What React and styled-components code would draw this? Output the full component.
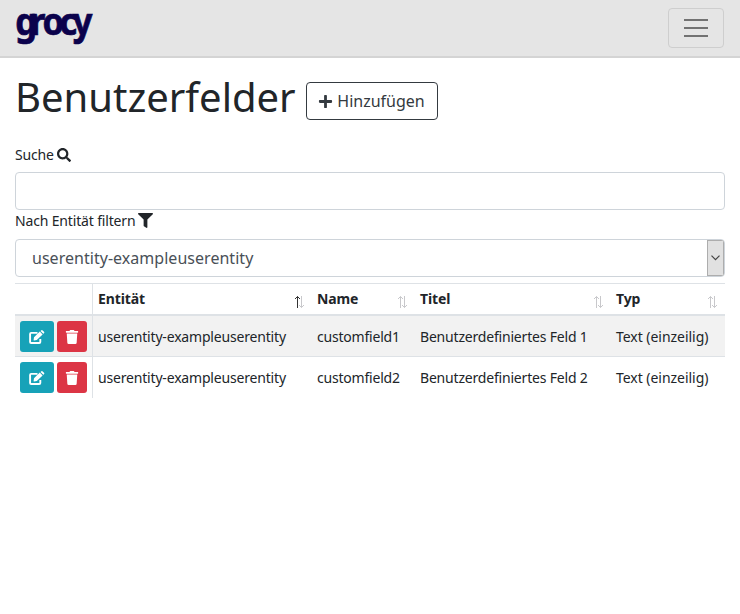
import React from "react";
import styled, { createGlobalStyle } from "styled-components";
import { FaPlus, FaSearch, FaFilter, FaTrash } from "react-icons/fa";

const GlobalStyle = createGlobalStyle`
  *, *::before, *::after { box-sizing: border-box; }
  body {
    margin: 0;
    background: #fff;
    color: #212529;
    font-family: "Noto Sans", "Open Sans", sans-serif;
    font-size: 14px;
    line-height: 1.5;
  }
`;

const Navbar = styled.nav`
  display: flex;
  align-items: center;
  justify-content: space-between;
  height: 58px;
  padding: 0 16px 0 15px;
  background: #e5e5e5;
  border-bottom: 2px solid #d4d4d4;
`;

const Logo = styled.svg`
  display: block;
  width: 90px;
  height: 56px;
  overflow: visible;
  fill: #0b024c;
  stroke: #0b024c;
  stroke-width: 0.7px;
  font-family: "Noto Sans", sans-serif;
  font-weight: 700;
  font-size: 37.5px;
`;

const Toggler = styled.button`
  display: flex;
  align-items: center;
  justify-content: center;
  width: 56px;
  height: 40px;
  padding: 0;
  background: transparent;
  border: 1px solid #cecece;
  border-radius: 4px;
`;

const Content = styled.main`
  padding: 14px 15px 0;
`;

const TitleRow = styled.header`
  display: flex;
  align-items: flex-start;
  height: 72px;
`;

const Title = styled.h1`
  margin: 1px 0 0;
  width: 291px;
  font-size: 40px;
  font-weight: 400;
  line-height: 48px;
  white-space: nowrap;
`;

const AddButton = styled.button`
  display: flex;
  align-items: center;
  justify-content: center;
  gap: 4px;
  width: 132px;
  height: 38px;
  margin-top: 10px;
  padding: 0 1px 0 0;
  background: transparent;
  border: 1px solid #343a40;
  border-radius: 4px;
  color: #343a40;
  font: 400 16px/24px "Noto Sans", sans-serif;
  white-space: nowrap;
`;

const Label = styled.label`
  display: flex;
  align-items: center;
  gap: 3px;
  height: 21px;
  margin-bottom: ${(p) => p.$gap};
  letter-spacing: -0.16px;
`;

const SearchInput = styled.input`
  display: block;
  width: 100%;
  height: 38px;
  padding: 6px 12px;
  border: 1px solid #ced4da;
  border-radius: 4px;
  outline: none;
  font: 400 16px/24px "Noto Sans", sans-serif;
`;

const Select = styled.div`
  display: flex;
  align-items: stretch;
  justify-content: space-between;
  height: 38px;
  margin-bottom: 6px;
  padding-left: 16px;
  border: 1px solid #ced4da;
  border-radius: 4px;
  overflow: hidden;
  color: #495057;
  font-size: 16px;
  letter-spacing: 0.03px;
  line-height: 36px;
`;

const SelectArrow = styled.span`
  display: flex;
  align-items: center;
  justify-content: center;
  width: 17px;
  padding-right: 1px;
  background: #e1e1e1;
  border: 1px solid #adadad;
`;

const Table = styled.table`
  width: 710px;
  table-layout: fixed;
  border-collapse: separate;
  border-spacing: 0;
`;

const HeadCell = styled.th`
  height: 33px;
  padding: 0 5px;
  border-top: 1px solid #dee2e6;
  border-bottom: 2px solid #dee2e6;
  border-right: ${(p) => (p.$divider ? "1px solid #dee2e6" : "0")};
  text-align: left;
  font-weight: 700;
  letter-spacing: -0.1px;
`;

const HeadContent = styled.div`
  display: flex;
  align-items: center;
  justify-content: space-between;
  height: 30px;
  padding-bottom: 2px;
`;

const SortIcon = styled.svg`
  width: 10px;
  height: 14px;
  margin: 8px 3px 0 0;
  fill: none;
  stroke: #c8c8cb;
`;

const Row = styled.tr`
  background: ${(p) => (p.$striped ? "#f2f2f2" : "#fff")};
`;

const Cell = styled.td`
  height: ${(p) => (p.$first ? "40px" : "42px")};
  padding: 0 5px;
  border-top: ${(p) => (p.$first ? "0" : "1px solid #dee2e6")};
  border-right: ${(p) => (p.$divider ? "1px solid #dee2e6" : "0")};
  letter-spacing: ${(p) => p.$tracking || "normal"};
  white-space: nowrap;
  vertical-align: middle;
`;

const Actions = styled.div`
  display: flex;
  gap: 3px;
`;

const ActionButton = styled.button`
  display: flex;
  align-items: center;
  justify-content: center;
  flex: none;
  width: ${(p) => (p.$danger ? "30px" : "34px")};
  height: 31px;
  padding: 1px 0 0;
  border: 0;
  border-radius: 3px;
  background: ${(p) => (p.$danger ? "#dc3545" : "#17a2b8")};
  color: #fff;
  font-size: 14px;
`;

const columns = [
  { label: "Entität", width: 219, sorted: true, tracking: "-0.18px" },
  { label: "Name", width: 103, tracking: "-0.21px" },
  { label: "Titel", width: 196, tracking: "-0.19px" },
  { label: "Typ", width: 114, tracking: "-0.04px" },
];

const fields = [
  ["userentity-exampleuserentity", "customfield1", "Benutzerdefiniertes Feld 1", "Text (einzeilig)"],
  ["userentity-exampleuserentity", "customfield2", "Benutzerdefiniertes Feld 2", "Text (einzeilig)"],
];

function Sort({ active }) {
  return (
    <SortIcon viewBox="0 0 10 14">
      <path d="M3.5 13V1.5M1 4L3.5 1.5L6 4" stroke={active ? "#333" : undefined} />
      <path d="M7.5 1V12.5M5 10L7.5 12.5L10 10" />
    </SortIcon>
  );
}

function EditIcon() {
  return (
    <svg width="16" height="14" viewBox="0 0 16 14">
      <path d="M8.5 2.9H2.2Q1.1 2.9 1.1 4V12Q1.1 13 2.2 13H10.2Q11.3 13 11.3 12V9" fill="none" stroke="#fff" strokeWidth="1.9" />
      <path d="M4.6 10L5 7.3L10.8 1.6L13.6 4.4L7.8 10.1L5.1 10.5Q4.6 10.5 4.6 10ZM11.5 .9L12.1 .4Q12.9 -.3 13.7 .4L15 1.7Q15.7 2.5 15 3.2L14.3 3.8Z" fill="#fff" />
    </svg>
  );
}

export default function App() {
  return (
    <>
      <GlobalStyle />
      <Navbar>
        <Logo viewBox="0 0 90 56" aria-label="grocy">
          <text transform="scale(0.92 1)" x="0.2 16.4 29.8 48.3 62.8" y="35.4">grocy</text>
        </Logo>
        <Toggler aria-label="Menü">
          <svg width="24" height="18" viewBox="0 0 24 18" stroke="#727272" strokeWidth="2">
            <path d="M0 1H24M0 9H24M0 17H24" />
          </svg>
        </Toggler>
      </Navbar>
      <Content>
        <TitleRow>
          <Title>Benutzerfelder</Title>
          <AddButton><FaPlus size={15} />Hinzufügen</AddButton>
        </TitleRow>
        <Label htmlFor="search" $gap="7px">Suche <FaSearch /></Label>
        <SearchInput id="search" />
        <Label $gap="8px">Nach Entität filtern <FaFilter size={15} /></Label>
        <Select>
          userentity-exampleuserentity
          <SelectArrow>
            <svg width="9" height="6" viewBox="0 0 9 6" fill="none" stroke="#444" strokeWidth="1.2">
              <path d="M.5 .7L4.5 4.7L8.5 .7" />
            </svg>
          </SelectArrow>
        </Select>
        <Table>
          <colgroup>
            <col width="78" />
            {columns.map((c) => <col key={c.label} width={c.width} />)}
          </colgroup>
          <thead>
            <tr>
              <HeadCell $divider />
              {columns.map((c) => (
                <HeadCell key={c.label}>
                  <HeadContent>{c.label}<Sort active={c.sorted} /></HeadContent>
                </HeadCell>
              ))}
            </tr>
          </thead>
          <tbody>
            {fields.map((field, i) => (
              <Row key={field[1]} $striped={i === 0}>
                <Cell $divider $first={i === 0}>
                  <Actions>
                    <ActionButton aria-label="Bearbeiten"><EditIcon /></ActionButton>
                    <ActionButton $danger aria-label="Löschen"><FaTrash /></ActionButton>
                  </Actions>
                </Cell>
                {field.map((value, j) => (
                  <Cell key={j} $first={i === 0} $tracking={columns[j].tracking}>{value}</Cell>
                ))}
              </Row>
            ))}
          </tbody>
        </Table>
      </Content>
    </>
  );
}
